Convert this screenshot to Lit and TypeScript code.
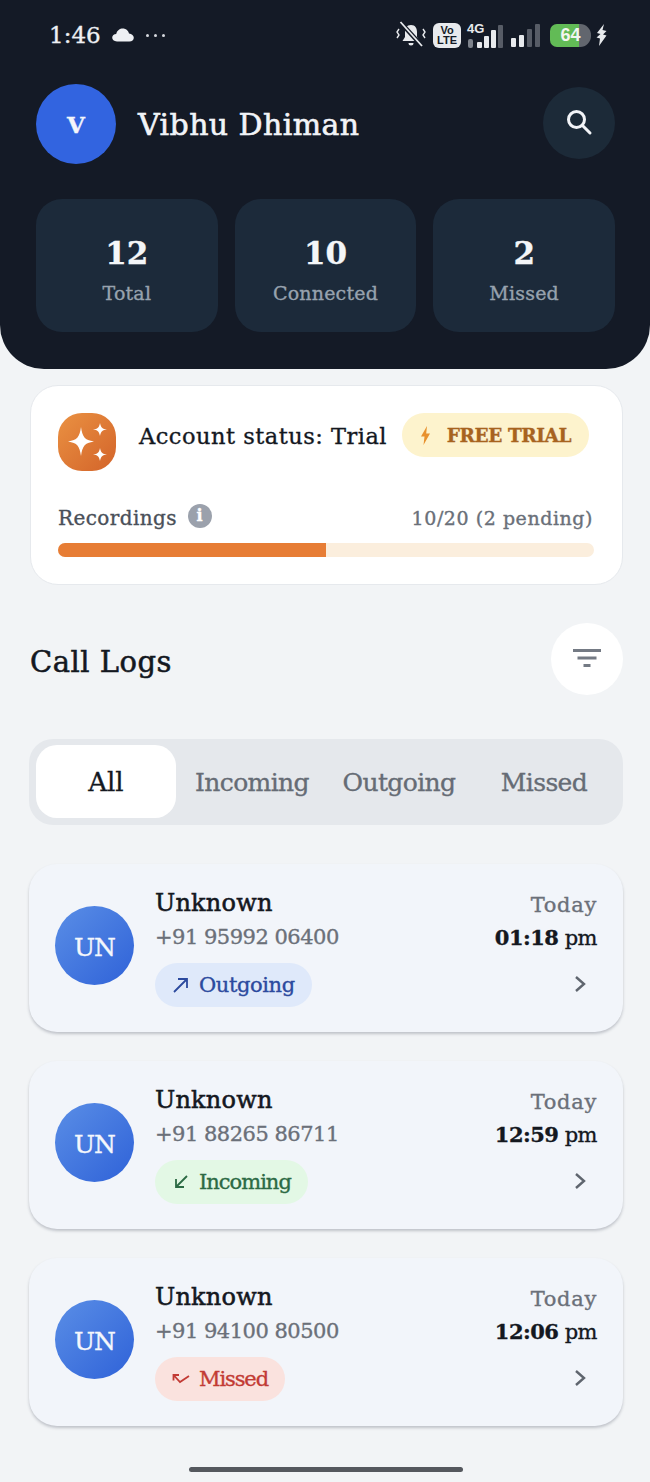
import { LitElement, css, html, svg } from 'lit';
import { customElement } from 'lit/decorators.js';

const calls = [
  { phone: '+91 95992 06400', time: '01:18', kind: 'Outgoing', cls: 'out' },
  { phone: '+91 88265 86711', time: '12:59', kind: 'Incoming', cls: 'in' },
  { phone: '+91 94100 80500', time: '12:06', kind: 'Missed', cls: 'miss' },
];

const kindIcons: Record<string, unknown> = {
  out: svg`<path d="M2 16 L15 3 M6 3 H15 V12" />`,
  in: svg`<path d="M15 3 L4 14 M4 6 V14 H12" />`,
  miss: svg`<path d="M1.500 10.500 V5 H7 M1.500 5 L8 12 L17 6" />`,
};

const signal = (heights: number[], on: number, gap: number) => html`<span class="bars" style="gap:${gap}px">
  ${heights.map(
    (h, i) => html`<i class=${i < on ? 'on' : ''} style="height:${h}px"></i>`
  )}
</span>`;

@customElement('app-root')
export class AppRoot extends LitElement {
  static styles = css`
    :host {
      display: block;
      width: 650px;
      height: 1482px;
      background: #f2f4f6;
      font-family: 'DejaVu Serif', 'Liberation Serif', serif;
      -webkit-text-stroke: 0.35px currentColor;
      overflow: hidden;
      position: relative;
    }
    .header {
      height: 369px;
      box-sizing: border-box;
      background: #141a26;
      border-radius: 0 0 44px 44px;
      padding: 0 35px 0 36px;
    }
    .status {
      height: 70px;
      margin: 0 8px 0 13px;
      display: flex;
      align-items: center;
      color: #eef0f3;
    }
    .clock {
      font-size: 23px;
    }
    .status .cloud {
      margin-left: 11px;
    }
    .dots {
      margin-left: 12px;
      display: flex;
      gap: 5px;
    }
    .dots i {
      width: 3px;
      height: 3px;
      border-radius: 50%;
      background: #d6d9de;
    }
    .status-right {
      margin-left: auto;
      display: flex;
      align-items: center;
    }
    .volte {
      margin-left: 7px;
      width: 28px;
      height: 25px;
      background: #e8eaed;
      border-radius: 6px;
      color: #141a26;
      font: 700 11px/10.500px 'Liberation Sans', sans-serif;
      -webkit-text-stroke: 0;
      text-align: center;
      display: flex;
      flex-direction: column;
      justify-content: center;
    }
    .net {
      margin-left: 7px;
      position: relative;
      display: flex;
      align-items: flex-end;
      height: 25px;
    }
    .net b {
      position: absolute;
      left: -1px;
      top: -1px;
      font: 700 13px/13px 'Liberation Sans', sans-serif;
      -webkit-text-stroke: 0;
      color: #e8eaed;
    }
    .bars {
      display: flex;
      align-items: flex-end;
      height: 23px;
    }
    .bars i {
      width: 5px;
      background: #575c66;
      border-radius: 1px;
    }
    .bars i.on {
      background: #e8eaed;
    }
    .tick {
      width: 5px;
      height: 9px;
      margin-right: 4px;
      border-radius: 2px;
      background: #7d828b;
    }
    .sim2 {
      margin-left: 8px;
    }
    .battery {
      margin-left: 10px;
      width: 41px;
      height: 23px;
      border-radius: 7px 11px 11px 7px;
      background: linear-gradient(90deg, #62bb56 71%, #62666e 71%);
      color: #f2f5f0;
      font: 700 18px/23px 'Liberation Sans', sans-serif;
      -webkit-text-stroke: 0;
      text-align: center;
    }
    .top {
      display: flex;
      align-items: center;
      height: 80px;
      margin-top: 14px;
    }
    .avatar {
      width: 80px;
      height: 80px;
      border-radius: 50%;
      background: #3264e0;
      color: #f4f6fb;
      font-size: 23px;
      font-weight: 700;
      display: flex;
      align-items: center;
      justify-content: center;
    }
    .name {
      margin-left: 22px;
      font-size: 30px;
      color: #f2f4f8;
      letter-spacing: 0.4px;
      -webkit-text-stroke: 0.6px currentColor;
    }
    .search {
      margin-left: auto;
      margin-bottom: 2px;
      width: 72px;
      height: 72px;
      border-radius: 50%;
      background: #1c2a38;
      display: flex;
      align-items: center;
      justify-content: center;
    }
    .stats {
      margin-top: 35px;
      display: grid;
      grid-template-columns: repeat(3, 1fr);
      gap: 17px;
    }
    .stat {
      height: 133px;
      border-radius: 26px;
      background: #1c2a3a;
      display: flex;
      flex-direction: column;
      align-items: center;
      padding-top: 33px;
      box-sizing: border-box;
    }
    .stat b {
      font-size: 31px;
      line-height: 42px;
      color: #f4f6f8;
      font-weight: 700;
    }
    .stat span {
      font-size: 19px;
      line-height: 26px;
      margin-top: 6px;
      color: #97a2ae;
      letter-spacing: 0.2px;
    }
    .main {
      padding: 16px 27px 0 29px;
    }
    .account {
      margin: 0 0 0 1px;
      height: 200px;
      box-sizing: border-box;
      padding: 27px 28px 0 27px;
      background: #fff;
      border: 1px solid #e6e9ed;
      border-radius: 28px;
    }
    .acc-top {
      display: flex;
      align-items: flex-start;
    }
    .spark {
      width: 58px;
      height: 58px;
      border-radius: 24px;
      background: linear-gradient(135deg, #ea9142, #d3642a);
    }
    .acc-label {
      margin-left: 23px;
      font-size: 22.5px;
      line-height: 47px;
      color: #14181f;
      white-space: nowrap;
      letter-spacing: 0.5px;
      width: 263px;
    }
    .trial {
      width: 187px;
      height: 44px;
      border-radius: 22px;
      background: #fdf3cd;
      color: #a7631f;
      font-size: 18.500px;
      font-weight: 700;
      letter-spacing: -0.4px;
      display: flex;
      align-items: center;
      justify-content: center;
      gap: 16px;
      white-space: nowrap;
    }
    .rec {
      margin-top: 30px;
      display: flex;
      align-items: center;
      justify-content: space-between;
      height: 34px;
      padding-right: 1px;
    }
    .rec-label {
      display: flex;
      align-items: center;
      gap: 11px;
      font-size: 20px;
      letter-spacing: 0.4px;
      color: #4a5059;
    }
    .info {
      width: 24px;
      height: 24px;
      border-radius: 50%;
      background: #9ba1ac;
      color: #fff;
      font: 700 16px/24px 'DejaVu Serif', serif;
      text-align: center;
      margin-top: -4px;
    }
    .rec-count {
      font-size: 19px;
      color: #6a7079;
      letter-spacing: 0.55px;
    }
    .progress {
      margin-top: 8px;
      height: 14px;
      border-radius: 7px;
      background: #fbeedd;
      overflow: hidden;
    }
    .progress div {
      height: 100%;
      width: 50%;
      background: #e77d35;
    }
    .logs-head {
      margin-top: 38px;
      height: 72px;
      display: flex;
      align-items: center;
      justify-content: space-between;
    }
    .logs-head h2 {
      margin: 6px 0 0 1px;
      font-size: 29px;
      font-weight: 400;
      color: #14181f;
      letter-spacing: 0.5px;
      -webkit-text-stroke: 0.55px currentColor;
    }
    .filter {
      width: 72px;
      height: 72px;
      border-radius: 50%;
      background: #fff;
      display: flex;
      align-items: center;
      justify-content: center;
    }
    .tabs {
      margin-top: 44px;
      height: 86px;
      box-sizing: border-box;
      padding: 6px 5px 7px 7px;
      border-radius: 24px;
      background: #e5e8ec;
      display: grid;
      grid-template-columns: 140px 152px 142px 1fr;
      align-items: center;
      font-size: 25px;
      color: #666c75;
      text-align: center;
      letter-spacing: -0.6px;
    }
    .tabs div {
      padding-top: 2px;
    }
    .tabs .active {
      height: 73px;
      box-sizing: border-box;
      padding-top: 0;
      line-height: 75px;
      background: #fff;
      color: #14181f;
      border-radius: 21px;
      font-size: 26px;
      letter-spacing: 0;
    }
    .cards {
      margin-top: 39px;
      display: flex;
      flex-direction: column;
      gap: 29px;
    }
    .card {
      height: 168px;
      box-sizing: border-box;
      padding: 0 26px;
      border-radius: 28px;
      background: #f2f5fa;
      box-shadow: 0 2px 3px rgba(60, 70, 85, 0.28);
      display: flex;
      align-items: center;
    }
    .un {
      flex: none;
      width: 79px;
      height: 79px;
      box-sizing: border-box;
      padding-top: 3px;
      margin-bottom: 5px;
      border-radius: 50%;
      background: linear-gradient(135deg, #5a8ee6, #2f62d8);
      color: #f4f7fc;
      font-size: 25px;
      display: flex;
      align-items: center;
      justify-content: center;
      letter-spacing: -1px;
    }
    .info-col {
      margin-left: 21px;
      display: flex;
      flex-direction: column;
      align-items: flex-start;
      height: 168px;
      padding-top: 23px;
      box-sizing: border-box;
    }
    .who {
      font-size: 24px;
      line-height: 32px;
      color: #14181f;
      letter-spacing: 0.2px;
      -webkit-text-stroke: 0.55px currentColor;
    }
    .phone {
      font-size: 21px;
      line-height: 34px;
      margin-top: 1px;
      color: #6b7079;
      letter-spacing: -0.5px;
      white-space: nowrap;
    }
    .pill {
      margin-top: 9px;
      height: 44px;
      padding: 0 17px;
      border-radius: 22px;
      display: flex;
      align-items: center;
      gap: 9px;
      font-size: 21px;
      letter-spacing: -0.4px;
    }
    .pill svg {
      fill: none;
      stroke: currentColor;
      stroke-width: 1.8;
    }
    .pill.out {
      background: #dfe9fa;
      color: #2c4a9e;
    }
    .pill.in {
      background: #e3f8e5;
      color: #2c6a44;
      letter-spacing: -1px;
    }
    .pill.miss {
      background: #fae2de;
      color: #c23a34;
      letter-spacing: -1.1px;
    }
    .right {
      margin-left: auto;
      height: 168px;
      padding-top: 25px;
      box-sizing: border-box;
      display: flex;
      flex-direction: column;
      align-items: flex-end;
    }
    .day {
      font-size: 21px;
      line-height: 32px;
      color: #6b7079;
      letter-spacing: 0.7px;
    }
    .time {
      font-size: 21px;
      line-height: 34px;
      color: #14181f;
      white-space: nowrap;
      letter-spacing: -0.5px;
    }
    .time b {
      font-weight: 700;
    }
    .chev {
      margin-top: 20px;
      margin-right: 11px;
    }
    .home {
      position: absolute;
      left: 189px;
      top: 1467px;
      width: 274px;
      height: 5px;
      border-radius: 3px;
      background: #55585e;
    }
  `;

  renderStatus() {
    return html`<div class="status">
      <span class="clock">1:46</span>
      <svg class="cloud" width="22" height="14" viewBox="0 0 22 14">
        <path d="M5 13.5 C1.8 13.5 0.2 11.6 0.2 9.6 C0.2 7.6 2 6 4.2 6 C5 2.6 7.8 0.6 10.8 0.6 C14 0.6 16.4 2.8 17 5.6 C19.8 6 21.8 7.6 21.8 9.8 C21.8 12 20 13.5 17.4 13.5 Z" fill="#eef0f3" />
      </svg>
      <span class="dots"><i></i><i></i><i></i></span>
      <span class="status-right">
        <svg width="30" height="28" viewBox="0 0 30 28" fill="#e8eaed">
          <path d="M15 4 C10.5 4 9 7.5 9 11 V16 L6.5 20 H23.5 L21 16 V11 C21 7.5 19.5 4 15 4 Z M12.5 22 H17.5 A2.5 2.5 0 0 1 12.5 22 Z" />
          <path d="M5 2 L26 25" stroke="#141a26" stroke-width="4.5" />
          <path d="M4.5 1 L26 25" stroke="#e8eaed" stroke-width="1.8" />
          <path d="M3 8 L1 11 L3 14 L1 17 M27 8 L29 11 L27 14 L29 17" fill="none" stroke="#e8eaed" stroke-width="1.4" />
        </svg>
        <span class="volte"><span>Vo</span><span>LTE</span></span>
        <span class="net"><b>4G</b><span class="tick"></span>${signal([6, 12, 18, 23], 3, 2)}</span>
        <span class="sim2">${signal([9, 12, 18, 23], 2, 3)}</span>
        <span class="battery">64</span>
        <svg style="margin-left:5px" width="11" height="22" viewBox="0 0 11 22" fill="#e8eaed">
          <path d="M8 0 L1 9 L4.500 10 L0.500 13.500 L4 14.500 L3 22 L10.500 11.500 L7 10.500 L10.500 7 L6.500 6 Z" />
        </svg>
      </span>
    </div>`;
  }

  render() {
    return html`
      <div class="header">
        ${this.renderStatus()}
        <div class="top">
          <div class="avatar">V</div>
          <div class="name">Vibhu Dhiman</div>
          <div class="search">
            <svg width="30" height="30" viewBox="0 0 30 30" fill="none" stroke="#f2f4f8" stroke-width="3">
              <circle cx="12.5" cy="11.5" r="8" />
              <path d="M18.5 17.5 L26 25" stroke-linecap="round" />
            </svg>
          </div>
        </div>
        <div class="stats">
          <div class="stat"><b>12</b><span>Total</span></div>
          <div class="stat"><b>10</b><span>Connected</span></div>
          <div class="stat"><b>2</b><span>Missed</span></div>
        </div>
      </div>
      <div class="main">
        <div class="account">
          <div class="acc-top">
            <div class="spark">
              <svg width="58" height="58" viewBox="0 0 58 58" fill="#fff">
                <path d="M23 14 C24.500 24 26.500 27 36 28.500 C26.500 30 24.500 33 23 43 C21.500 33 19.500 30 10 28.500 C19.500 27 21.500 24 23 14 Z" />
                <path d="M42 10 C42.800 14.500 44.500 16 49 16.500 C44.500 17 42.800 18.500 42 23 C41.200 18.500 39.500 17 35 16.500 C39.500 16 41.200 14.500 42 10 Z" />
                <path d="M42 35 C42.800 39.500 44.500 41 49 41.500 C44.500 42 42.800 43.500 42 48 C41.200 43.500 39.500 42 35 41.500 C39.500 41 41.200 39.500 42 35 Z" />
              </svg>
            </div>
            <div class="acc-label">Account status: Trial</div>
            <div class="trial">
              <svg width="11" height="19" viewBox="0 0 11 19" fill="#e8912e">
                <path d="M7 0 L1 10.5 H4.5 L3.5 19 L10 7.5 H6.2 Z" />
              </svg>
              FREE TRIAL
            </div>
          </div>
          <div class="rec">
            <div class="rec-label">Recordings <span class="info">i</span></div>
            <div class="rec-count">10/20 (2 pending)</div>
          </div>
          <div class="progress"><div></div></div>
        </div>
        <div class="logs-head">
          <h2>Call Logs</h2>
          <div class="filter">
            <svg width="28" height="20" viewBox="0 0 28 20" fill="#747a84">
              <rect x="0" y="0" width="28" height="3" />
              <rect x="4.500" y="7.500" width="19" height="3" />
              <rect x="10.500" y="15" width="7" height="3" />
            </svg>
          </div>
        </div>
        <div class="tabs">
          <div class="active">All</div>
          <div>Incoming</div>
          <div>Outgoing</div>
          <div>Missed</div>
        </div>
        <div class="cards">
          ${calls.map(
            (c) => html`<div class="card">
              <div class="un">UN</div>
              <div class="info-col">
                <div class="who">Unknown</div>
                <div class="phone">${c.phone}</div>
                <div class="pill ${c.cls}">
                  <svg width="18" height="18" viewBox="0 0 18 18">${kindIcons[c.cls]}</svg>
                  ${c.kind}
                </div>
              </div>
              <div class="right">
                <div class="day">Today</div>
                <div class="time"><b>${c.time}</b> pm</div>
                <svg class="chev" width="12" height="18" viewBox="0 0 12 18" fill="none" stroke="#5f656e" stroke-width="2.400">
                  <path d="M2 2 L10 9 L2 16" />
                </svg>
              </div>
            </div>`
          )}
        </div>
      </div>
      <div class="home"></div>
    `;
  }
}
